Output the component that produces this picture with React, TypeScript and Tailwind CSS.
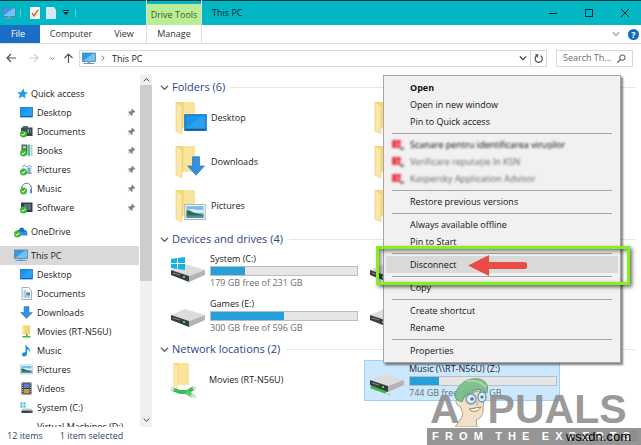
// Import dependencies
import { useState } from 'react';
import type { ReactNode } from 'react';

// Blue screen icon, used for desktop entries
const ScreenIcon = ({ className = 'w-[13px] h-[13px]' }: { className?: string }) => (
    <svg className={className} viewBox="0 0 26 22" preserveAspectRatio="none">
        <rect x="1" y="1" width="24" height="19" fill="#1a95ee" stroke="#1173bf" strokeWidth="1.5" />
        <path d="M2 18 L20 2 H24 V18 Z" fill="#35a9f5" opacity="0.6" />
        <rect x="2" y="18" width="22" height="2" fill="#0e5f9f" />
    </svg>
);

// Monitor with a stand
const PcIcon = () => (
    <svg className="w-[14px] h-[13px] shrink-0" viewBox="0 0 28 26">
        <rect x="1" y="2" width="26" height="17" fill="#2f9be8" stroke="#5f7f99" strokeWidth="1.5" />
        <path d="M2 18 L22 3 H26 V18 Z" fill="#8fd3fa" opacity="0.7" />
        <rect x="11" y="19" width="6" height="3" fill="#8fa5b5" />
        <rect x="3" y="22" width="22" height="2" fill="#5d9cc4" />
    </svg>
);

// Green sync tick
const Tick = () => (
    <g>
        <circle cx="7" cy="18" r="7" fill="#3fb83a" />
        <path d="M3.5 18 L6 20.5 L10.5 15.5" fill="none" stroke="#fff" strokeWidth="2" />
    </g>
);

const StarIcon = () => (
    <svg className="w-[11px] h-[11px] shrink-0" viewBox="0 0 22 22">
        <path d="M13 1 L15 8 L22 9 L16 14 L17 21 L11 17 L3 21 L6 13 L0 9 L8 8 Z" fill="#2b9be8" />
    </svg>
);

const CloudIcon = () => (
    <svg className="w-[14px] h-[13px] shrink-0" viewBox="0 0 28 26">
        <path d="M5 18 C3 12 8 9 10 10 C11 3 20 3 21 10 C27 10 28 18 24 20 H9 Z" fill="#1173c7" />
        <path d="M12 20 C11 15 15 12 18 14 C21 11 25 13 25 16 C28 17 28 21 25 21 H12 Z" fill="#2c8fe0" />
        <Tick />
    </svg>
);

const SyncedDocsIcon = () => (
    <svg className="w-[13px] h-[13px] shrink-0" viewBox="0 0 26 26">
        <rect x="2" y="5" width="23" height="17" fill="#35454e" />
        <rect x="6" y="2" width="10" height="5" fill="#4f6570" />
        <rect x="15" y="8" width="3" height="8" fill="#88a5b0" />
        <rect x="20" y="8" width="2" height="8" fill="#607986" />
        <Tick />
    </svg>
);

const BooksIcon = () => (
    <svg className="w-[13px] h-[13px] shrink-0" viewBox="0 0 26 26">
        <rect x="3" y="1" width="12" height="21" fill="#2e7866" />
        <rect x="6" y="4" width="6" height="5" fill="#f2c447" />
        <rect x="16" y="1" width="4" height="23" fill="#62b9a8" />
        <rect x="21" y="2" width="4" height="22" fill="#a9d5cc" />
        <Tick />
    </svg>
);

const SyncedPicturesIcon = () => (
    <svg className="w-[13px] h-[13px] shrink-0" viewBox="0 0 26 26">
        <path d="M3 6 H24 V22 H8 Z" fill="#e3eff5" />
        <path d="M4 7 L10 4 L14 8 L20 5 L24 8" fill="none" stroke="#76b5d6" strokeWidth="2" />
        <path d="M12 22 L18 11 L24 22 Z" fill="#8ea9b5" />
        <circle cx="18" cy="12" r="3" fill="#5fa6c8" />
        <Tick />
    </svg>
);

const HeadphonesIcon = () => (
    <svg className="w-[13px] h-[13px] shrink-0" viewBox="0 0 26 26">
        <path d="M3 16 C2 -2 24 -2 23 16" fill="none" stroke="#2d4654" strokeWidth="1.6" />
        <rect x="20" y="14" width="4" height="9" rx="2" fill="#3b8ed0" />
        <Tick />
    </svg>
);

const SoftwareIcon = () => (
    <svg className="w-[13px] h-[13px] shrink-0" viewBox="0 0 26 26">
        <rect x="2" y="3" width="23" height="19" fill="#2c4149" />
        <path d="M8 8 H22 M8 12 H22 M14 16 H22" stroke="#7fa0a8" strokeWidth="2" />
        <Tick />
    </svg>
);

const DocumentIcon = () => (
    <svg className="w-[13px] h-[13px] shrink-0" viewBox="0 0 26 26">
        <path d="M4 1 H17 L23 7 V25 H4 Z" fill="#f8fafb" stroke="#8b979e" strokeWidth="1.5" />
        <path d="M7 8 H12 M7 12 H20 M7 16 H20 M7 20 H20" stroke="#63a9cf" strokeWidth="2" />
        <rect x="13" y="11" width="7" height="6" fill="#4e92b8" />
    </svg>
);

const DownArrowIcon = ({ className = 'w-[13px] h-[13px] shrink-0' }: { className?: string }) => (
    <svg className={className} viewBox="0 0 26 26" preserveAspectRatio="none">
        <path d="M8 1 H18 V13 H25 L13 25 L1 13 H8 Z" fill="#3391e0" stroke="#2377bd" />
    </svg>
);

const NetFolderIcon = () => (
    <svg className="w-[13px] h-[13px] shrink-0" viewBox="0 0 26 26">
        <path d="M5 1 H20 V19 H5 Z" fill="#f6d56f" />
        <path d="M5 1 L9 4 V21 L5 19 Z" fill="#fbe6a0" />
        <path d="M12 18 H15 V22 H21 V25 H5 V22 H12 Z" fill="#43b649" />
    </svg>
);

const NoteIcon = () => (
    <svg className="w-[13px] h-[13px] shrink-0" viewBox="0 0 26 26">
        <path d="M12 1 C13 7 22 8 20 17 C19 12 15 11 14 11 V20 C14 26 4 27 4 21 C4 17 9 16 11 17 V1 Z" fill="#1c8de0" />
    </svg>
);

const PictureIcon = ({ className = 'w-[13px] h-[13px] shrink-0' }: { className?: string }) => (
    <svg className={className} viewBox="0 0 26 20">
        <rect x="1" y="1" width="24" height="18" fill="#f5f8fa" stroke="#9aa5ad" />
        <rect x="3" y="3" width="20" height="14" fill="#78bdf0" />
        <path d="M3 8 C9 5 14 9 23 7 V11 H3 Z" fill="#dceefa" />
        <path d="M3 8 C8 7 10 12 23 13 V15 H3 Z" fill="#2f6b4c" />
        <rect x="3" y="14" width="20" height="3" fill="#4b8fb5" />
    </svg>
);

const VideoIcon = () => (
    <svg className="w-[13px] h-[13px] shrink-0" viewBox="0 0 26 26">
        <rect x="3" y="1" width="20" height="24" fill="#39424a" />
        <rect x="7" y="3" width="12" height="9" fill="#5d7fc0" />
        <rect x="7" y="14" width="12" height="9" fill="#c79a4a" />
        <path d="M5 2 V25 M21 2 V25" stroke="#c6ccd0" strokeWidth="1.5" strokeDasharray="2 2" />
    </svg>
);

const SmallDriveIcon = ({ windows = false }: { windows?: boolean }) => (
    <svg className="w-[13px] h-[13px] shrink-0" viewBox="0 0 26 26">
        {windows && <path d="M1 3 H5 V7 H1 Z M7 3 H11 V7 H7 Z M1 9 H5 V13 H1 Z M7 9 H11 V13 H7 Z" fill="#1fb2e8" />}
        <path d="M6 15 H22 L25 19 H3 Z" fill="#c9cccd" />
        <rect x="3" y="19" width="22" height="5" fill="#3d4145" />
        <rect x="20" y="21" width="3" height="1" fill="#58d05c" />
    </svg>
);

const PinIcon = () => (
    <svg className="w-[9px] h-[9px] shrink-0" viewBox="0 0 18 18">
        <path d="M10 1 L17 8 L15 9 L14 8 L11 12 L11 15 L9 16 L6 12 L1 17 L5 11 L2 8 L3 7 L6 7 L10 4 L9 3 Z" fill="#7b868c" />
    </svg>
);

// Large folder, with an optional picture lying over its corner
const FolderIcon = ({ children }: { children?: ReactNode }) => (
    <span className="relative w-8 h-8 shrink-0">
        <svg className="w-8 h-8" viewBox="0 0 32 32">
            <path d="M1 0 H20 V26 H6 L1 28 Z" fill="#f7d778" />
            <path d="M9 0 H20 V26 H8 Z" fill="#fae39b" />
            <path d="M1 0 L7 4 V32 L1 29 Z" fill="#fbe7a8" stroke="#ecc865" strokeWidth="0.6" />
        </svg>
        {children}
    </span>
);

// Large drive
const DriveIcon = ({ windows = false, network = false }: { windows?: boolean; network?: boolean }) => (
    <svg className="w-[34px] h-[30px] shrink-0" viewBox="0 0 34 30">
        {network && (
            <g>
                <path d="M1 20 L15 25 L20 27" stroke="#3dbb3f" strokeWidth="5" fill="none" />
                <path d="M16 28 L22 25" stroke="#d9e8da" strokeWidth="3" />
            </g>
        )}
        <path d="M0 14 L14 8 L34 14 L18 20 Z" fill="#dcdcdc" />
        <path d="M18 20 L34 14 V19 L18 26 Z" fill="#b4b4b4" />
        <path d="M0 14 L18 20 V26 L0 19 Z" fill="#3a3c3e" />
        <path d="M2 17 L9 19" stroke="#85898c" strokeWidth="1" />
        <rect x="12" y="20" width="2" height="2" fill="#4ddb4f" />
        {windows && <path d="M0 3 L6 2 V7 H0 Z M7 2 L14 1 V7 H7 Z M0 8 H6 V13 L0 12 Z M7 8 H14 V14 L7 13 Z" fill="#16b1e7" />}
    </svg>
);

const NetworkFolderIcon = () => (
    <svg className="w-[34px] h-9 shrink-0" viewBox="0 0 34 36">
        <path d="M2 1 H18 V23 H2 Z" fill="#f7d778" />
        <path d="M8 1 H18 V23 H8 Z" fill="#fae39b" />
        <path d="M2 1 L7 4 V27 L2 24 Z" fill="#fbe7a8" />
        <path d="M1 27 L9 30 L16 30 L23 26" stroke="#3dbb56" strokeWidth="4" fill="none" />
        <path d="M15 30 L22 34" stroke="#58cf6d" strokeWidth="4" />
        <path d="M-1 26 L3 28 M20 33 L25 35 M22 27 L25 25" stroke="#d5dfd8" strokeWidth="3" />
    </svg>
);

// Red icon of the antivirus entries
const ShieldIcon = () => (
    <svg className="w-3 h-3 shrink-0 blur-[1px]" viewBox="0 0 12 12">
        <path d="M0 1 H9 L8 9 H0 Z" fill="#e8404a" />
        <path d="M4 3 L6 5 L4 8" stroke="#fbd5d7" fill="none" />
        <rect x="8" y="8" width="4" height="3" fill="#8b8f90" />
    </svg>
);

const Chevron = ({ className }: { className: string }) => (
    <svg className={className} viewBox="0 0 10 10">
        <path d="M1 3 L5 7 L9 3" fill="none" stroke="currentColor" strokeWidth="1.4" />
    </svg>
);

// Navigation pane data
const quickAccess = [
    { label: 'Desktop', icon: <ScreenIcon className="w-[13px] h-[11px] shrink-0" /> },
    { label: 'Documents', icon: <SyncedDocsIcon /> },
    { label: 'Books', icon: <BooksIcon /> },
    { label: 'Pictures', icon: <SyncedPicturesIcon /> },
    { label: 'Music', icon: <HeadphonesIcon /> },
    { label: 'Software', icon: <SoftwareIcon /> },
];

const thisPc = [
    { label: 'Desktop', icon: <ScreenIcon className="w-[13px] h-[11px] shrink-0" /> },
    { label: 'Documents', icon: <DocumentIcon /> },
    { label: 'Downloads', icon: <DownArrowIcon /> },
    { label: 'Movies (RT-N56U)', icon: <NetFolderIcon /> },
    { label: 'Music', icon: <NoteIcon /> },
    { label: 'Pictures', icon: <PictureIcon /> },
    { label: 'Videos', icon: <VideoIcon /> },
    { label: 'System (C:)', icon: <SmallDriveIcon windows /> },
    { label: 'Virtual Machines (D:)', icon: <SmallDriveIcon /> },
];

// Context menu data, one list for each block between the lines
const menuGroups = [
    ['Open', 'Open in new window', 'Pin to Quick access'],
    ['Scanare pentru identificarea virușilor', 'Verificare reputație în KSN', 'Kaspersky Application Advisor'],
    ['Restore previous versions'],
    ['Always available offline', 'Pin to Start'],
    ['Disconnect'],
    ['Copy'],
    ['Create shortcut', 'Rename'],
    ['Properties'],
];

// Title bar and ribbon tabs
const TitleBar = () => (
    <header className="flex h-11 border-b border-[#dcdddd] shrink-0 text-[9px]">
        <div className="flex flex-col w-[146px]">
            <div className="flex items-center h-[25px] bg-[#00b7c3] border-t border-[#083c42] pl-[2px] gap-1">
                <PcIcon />
                <span className="w-px h-2 bg-[#63ccd2]" />
                <svg className="w-[10px] h-3 ml-[5px]" viewBox="0 0 10 12">
                    <rect width="10" height="12" fill="#f5f5f5" />
                    <path d="M2 6 L4 9 L8 3" fill="none" stroke="#e0632f" strokeWidth="1.4" />
                </svg>
                <svg className="w-[10px] h-3 ml-[2px]" viewBox="0 0 10 12">
                    <path d="M0 0 H8 L10 3 V12 H0 Z" fill="#d7e8f2" />
                </svg>
                <svg className="w-[6px] h-[6px] ml-[3px]" viewBox="0 0 6 6">
                    <path d="M0 0 H6 V1 H0 Z M0 2 H6 L3 5 Z" fill="#0a2a2d" />
                </svg>
                <span className="w-px h-2 ml-[2px] bg-[#63ccd2]" />
            </div>
            <nav className="flex h-[18px] items-stretch">
                <button className="w-10 shrink-0 bg-[#1a6fc4] text-white pr-1">File</button>
                <button className="w-[62px] shrink-0">Computer</button>
                <button className="w-[44px] shrink-0">View</button>
            </nav>
        </div>
        <div className="flex flex-col w-14 border-x border-[#dcdddd]">
            <div className="h-1 bg-[#00b7c3] border-t border-[#083c42]" />
            <div className="h-[21px] bg-[#b9ee94] leading-[21px] text-center whitespace-nowrap text-[#3d5a35]">Drive Tools</div>
            <button className="h-[18px]">Manage</button>
        </div>
        <div className="flex flex-col flex-1">
            <div className="flex items-center justify-between h-[25px] bg-[#00b7c3] border-t border-[#083c42] pl-[10px] pr-3">
                <h1 className="text-[#06272a]">This PC</h1>
                <div className="flex items-center gap-7 text-[#0a2a2d]">
                    <button aria-label="Minimize">
                        <svg className="w-2 h-2" viewBox="0 0 8 8"><path d="M0 4.5 H8" stroke="currentColor" /></svg>
                    </button>
                    <button aria-label="Maximize">
                        <svg className="w-2 h-2" viewBox="0 0 8 8"><rect x="0.5" y="0.5" width="7" height="7" fill="none" stroke="currentColor" /></svg>
                    </button>
                    <button aria-label="Close">
                        <svg className="w-2 h-2" viewBox="0 0 8 8"><path d="M0 0 L8 8 M8 0 L0 8" stroke="currentColor" /></svg>
                    </button>
                </div>
            </div>
            <div className="flex items-center justify-end h-[18px] gap-2 pr-[2px]">
                <Chevron className="w-2 h-2 text-[#9a9a9a]" />
                <button aria-label="Help" className="w-[11px] h-[11px] rounded-full bg-[#0f6cc4] text-white leading-[11px] font-bold">?</button>
            </div>
        </div>
    </header>
);

// Arrows, address box and search box
const AddressBar = () => {

    // State
    const [search, setSearch] = useState('');

    return (
        <div className="flex items-center h-[31px] pb-[3px] pl-[6px] pr-2 shrink-0 text-[9px] text-[#555]">
            <button aria-label="Back">
                <svg className="w-[10px] h-[10px]" viewBox="0 0 10 10"><path d="M10 5 H1 M5 1 L1 5 L5 9" fill="none" stroke="#555" strokeWidth="1.2" /></svg>
            </button>
            <button aria-label="Forward" className="ml-[13px]">
                <svg className="w-[10px] h-[10px]" viewBox="0 0 10 10"><path d="M0 5 H9 M5 1 L9 5 L5 9" fill="none" stroke="#cfcfcf" strokeWidth="1.2" /></svg>
            </button>
            <button aria-label="Recent" className="ml-[11px]"><Chevron className="w-[5px] h-[5px]" /></button>
            <button aria-label="Up" className="ml-[9px]">
                <svg className="w-[9px] h-[10px]" viewBox="0 0 9 10"><path d="M4.5 10 V1 M0.5 5 L4.5 1 L8.5 5" fill="none" stroke="#555" strokeWidth="1.2" /></svg>
            </button>
            <div className="flex flex-1 items-center h-[17px] ml-[6px] border border-[#d9d9d9] pl-[2px]">
                <PcIcon />
                <Chevron className="w-[6px] h-[6px] ml-1 -rotate-90" />
                <span className="flex-1 ml-[6px] leading-none text-[#222]">This PC</span>
                <Chevron className="w-2 h-2 mr-[3px] text-[#333]" />
                <button aria-label="Refresh" className="flex items-center justify-center w-4 h-[15px] border-l border-[#d9d9d9]">
                    <svg className="w-[9px] h-[9px]" viewBox="0 0 10 10"><path d="M3 2 A4 4 0 1 0 7.5 2 M1.5 1 H4 V4" fill="none" stroke="#444" strokeWidth="1.2" /></svg>
                </button>
            </div>
            <label className="flex items-center w-[77px] h-[17px] ml-[9px] border border-[#d9d9d9] px-[6px]">
                <input
                    aria-label="Search This PC"
                    placeholder="Search Th..."
                    value={search}
                    onChange={(e) => setSearch(e.target.value)}
                    className="flex-1 w-0 min-w-0 outline-none placeholder:text-[#6d6d6d]"
                />
                <svg className="w-[9px] h-[9px] shrink-0" viewBox="0 0 10 10">
                    <circle cx="6" cy="4" r="3" fill="none" stroke="#444" strokeWidth="1.1" />
                    <path d="M4 6 L0.5 9.5" stroke="#444" strokeWidth="1.3" />
                </svg>
            </label>
        </div>
    );
};

// Row of the navigation pane
const NavRow = ({ label, icon, pinned = false }: { label: string; icon: ReactNode; pinned?: boolean }) => (
    <li className="flex items-center h-[19px] pl-5 pr-[3px] gap-1">
        {icon}
        <span className="flex-1 whitespace-nowrap">{label}</span>
        {pinned && <PinIcon />}
    </li>
);

// Navigation pane with its scrollbar
const NavPane = () => (
    <aside className="flex w-[152px] shrink-0 overflow-hidden text-[9px] text-[#222]">
        <div className="w-[140px] pt-[9px] pr-px">
            <div className="flex items-center h-[19px] pl-[17px] gap-[3px]"><StarIcon />Quick access</div>
            <ul className="pb-[5px]">
                {quickAccess.map((item) => <NavRow key={item.label} {...item} pinned />)}
            </ul>
            <div className="flex items-center h-[19px] pl-[14px] gap-[3px] mb-[5px]"><CloudIcon />OneDrive</div>
            <div className="flex items-center h-[19px] pl-[14px] gap-[3px] bg-[#d9d9d9]"><PcIcon />This PC</div>
            <ul>
                {thisPc.map((item) => <NavRow key={item.label} {...item} />)}
            </ul>
        </div>
        <div className="flex flex-col items-center w-3 bg-[#f0f0f0] text-[#444]">
            <Chevron className="w-[7px] h-[10px] rotate-180 shrink-0" />
            <div className="w-full h-[196px] bg-[#cdcdcd] shrink-0" />
            <Chevron className="w-[7px] h-[10px] mt-auto mb-[2px]" />
        </div>
    </aside>
);

// Collapsible section of the content area
const Section = ({ title, children }: { title: string; children: ReactNode }) => {

    // State
    const [open, setOpen] = useState(true);

    return (
        <section>
            <div className="flex items-center gap-[6px]">
                <button className="flex items-center gap-[3px] text-[11px] leading-[18px] text-[#2f3f8f] whitespace-nowrap" onClick={() => setOpen(!open)}>
                    <Chevron className="w-[9px] h-[9px] text-[#666]" />
                    {title}
                </button>
                <span className="flex-1 h-px bg-[#e6e6e6]" />
            </div>
            {open && <div className="grid grid-cols-[199px_201px]">{children}</div>}
        </section>
    );
};

const FolderItem = ({ label, children }: { label: string; children?: ReactNode }) => (
    <div className="flex items-center h-11 pl-[15px] gap-1">
        <FolderIcon>{children}</FolderIcon>
        <span className="text-[9px] text-[#222]">{label}</span>
    </div>
);

// Drive with its usage bar
const DriveItem = ({ label, free, used, icon, className = 'h-[45px] pl-[11px]' }: {
    label: string;
    free: string;
    used: number;
    icon: ReactNode;
    className?: string;
}) => (
    <div className={`flex items-center gap-[5px] ${className}`}>
        {icon}
        <div className="w-[148px] text-[9px] leading-[14px] whitespace-nowrap">
            <p className="text-[#222]">{label}</p>
            <div className="h-[10px] border border-[#bcbcbc] bg-[#e6e6e6]">
                <div className="h-full bg-[#26a0da]" style={{ width: `${used}%` }} />
            </div>
            <p className="text-[#6d6d6d]">{free}</p>
        </div>
    </div>
);

// Content area
const Content = () => (
    <main className="flex-1 min-w-0 pl-2 pr-[5px] pt-[3px]">
        <Section title="Folders (6)">
            <FolderItem label="Desktop"><ScreenIcon className="absolute left-[9px] top-3 w-[23px] h-[18px]" /></FolderItem>
            <FolderItem label="Documents" />
            <FolderItem label="Downloads"><DownArrowIcon className="absolute left-3 top-[10px] w-[18px] h-5" /></FolderItem>
            <FolderItem label="Music" />
            <FolderItem label="Pictures"><PictureIcon className="absolute left-[9px] top-[13px] w-[22px] h-[18px]" /></FolderItem>
            <FolderItem label="Videos" />
        </Section>
        <div className="h-[2px]" />
        <Section title="Devices and drives (4)">
            <DriveItem label="System (C:)" free="179 GB free of 231 GB" used={23} icon={<DriveIcon windows />} />
            <DriveItem label="Virtual Machines (D:)" free="120 GB free of 231 GB" used={48} icon={<DriveIcon />} />
            <DriveItem label="Games (E:)" free="300 GB free of 596 GB" used={50} icon={<DriveIcon />} />
            <DriveItem label="Backup (F:)" free="80 GB free of 596 GB" used={86} icon={<DriveIcon />} />
        </Section>
        <div className="h-[2px]" />
        <Section title="Network locations (2)">
            <div className="flex items-center h-11 pl-[11px] gap-1">
                <NetworkFolderIcon />
                <span className="text-[9px] text-[#222]">Movies (RT-N56U)</span>
            </div>
            <DriveItem
                label="Music (\\RT-N56U) (Z:)"
                free="744 GB free of 931 GB"
                used={20}
                icon={<DriveIcon network />}
                className="h-[41px] mt-[2px] ml-[5px] pl-[5px] bg-[#cce8ff] border border-[#99d1ff]"
            />
        </Section>
    </main>
);

// Menu lying over the content, with the marked entry
const ContextMenu = () => (
    <div className="absolute left-[383px] top-[75px] w-[238px]">
        <ul className="border border-[#a5a5a5] bg-[#f1f1f1] py-[3px] px-[2px] text-[9px] text-[#111] shadow-[2px_2px_2px_#00000080]">
            {menuGroups.map((group, g) => (
                <li key={group[0]}>
                    {g > 0 && <hr className="mx-[6px] mt-[3px] mb-[2px] border-[#a5a5a5]" />}
                    {group.map((label, i) => (
                        <button
                            key={label}
                            className={`flex items-center w-full h-[17px] pl-[6px] gap-[6px] text-left whitespace-nowrap
                                ${label === 'Open' ? 'font-bold' : ''}
                                ${label === 'Disconnect' ? 'bg-[#d9d9d9]' : ''}
                            `}
                        >
                            <span className="w-3 shrink-0">{g === 1 && <ShieldIcon />}</span>
                            <span
                                className={`
                                    ${g === 1 ? 'blur-[1px]' : ''}
                                    ${g === 1 && i === 0 ? 'text-black' : ''}
                                    ${g === 1 && i > 0 ? 'text-[#666]' : ''}
                                `}
                            >
                                {label}
                            </span>
                        </button>
                    ))}
                </li>
            ))}
        </ul>
        <div className="absolute -left-[7px] top-[171px] w-[254px] h-[39px] border-3 border-[#84f01e] shadow-[2px_2px_4px_#00000099,inset_2px_2px_4px_#00000080]" />
        <svg className="absolute left-[85px] top-[180px] w-[59px] h-[21px]" viewBox="0 0 59 21">
            <path d="M0 10.5 L21 0 V7 H56 A3.5 3.5 0 0 1 56 14 H21 V21 Z" fill="#e94b45" />
        </svg>
    </div>
);

// Site mark in the bottom corner
const Watermark = () => (
    <div className="absolute right-0 bottom-0 w-[214px] font-['Liberation_Sans',sans-serif] pointer-events-none">
        <div className="flex items-end pl-[3px] pb-px h-9 text-[41px] leading-9 font-bold text-[#8c8c8c]/90">
            <span>A</span>
            <svg className="w-9 h-[50px] -ml-2 shrink-0" viewBox="0 0 36 50">
                <path d="M6 23 C3 21 3 29 8 29 L11 37 C9 42 6 46 3 50 H25 L24 43 C29 42 32 36 31 31 L33 17 L25 14 Z" fill="#f1dec3" opacity="0.9" stroke="#a89678" strokeWidth="1" />
                <path d="M3 20 C4 8 15 0 27 2 C34 3 37 9 35 16 L27 12 C21 13 18 17 13 18 L10 25 L5 23 Z" fill="#79bd84" opacity="0.9" stroke="#5f9c73" strokeWidth="1" />
                <path d="M15 4 C22 3 29 5 34 10" fill="none" stroke="#a8d9a8" strokeWidth="2" />
                <ellipse cx="19" cy="22" rx="5" ry="5" fill="#dcebf4" stroke="#6d93b3" strokeWidth="1.3" />
                <ellipse cx="30" cy="20" rx="4" ry="5" fill="#dcebf4" stroke="#6d93b3" strokeWidth="1.3" />
                <circle cx="20" cy="22" r="1.8" fill="#4d7798" />
                <circle cx="30" cy="20" r="1.6" fill="#4d7798" />
                <path d="M17 32 C21 36 26 35 29 30 Z" fill="#fff" stroke="#a07c5c" />
                <path d="M24 25 C27 25 27 28 24 28" fill="none" stroke="#b89b78" />
            </svg>
            <span>PUALS</span>
        </div>
        <div className="flex items-center h-[17px] pl-[5px] bg-[#8a8a8a]/90 text-[11px] font-bold text-white whitespace-nowrap">
            <span className="flex justify-between w-[198px]">
                {'FROM THE EXPERTS'.split('').map((letter, i) => <span key={i}>{letter}</span>)}
            </span>
        </div>
        <span className="absolute right-[10px] bottom-0 text-[13px] leading-4 text-black">wsxdn.com</span>
    </div>
);

// Visible page
const App = () => (
    <div className="relative flex flex-col h-screen overflow-hidden bg-white font-['Open_Sans',sans-serif] text-[#333]">
        <TitleBar />
        <AddressBar />
        <div className="flex flex-1 min-h-0">
            <NavPane />
            <Content />
        </div>
        <footer className="flex items-center h-[18px] shrink-0 pl-[7px] pr-1 gap-[17px] text-[9px] text-[#2f3f6f]">
            <span>12 items</span>
            <span className="flex-1">1 item selected</span>
            <button aria-label="Details view">
                <svg className="w-[11px] h-[10px]" viewBox="0 0 11 10">
                    <path d="M1 2 H4 M1 5 H4 M1 8 H4 M6 2 H10 M6 5 H10 M6 8 H10" stroke="#444" />
                </svg>
            </button>
            <button aria-label="Tiles view" className="-ml-2">
                <svg className="w-[11px] h-[10px]" viewBox="0 0 11 10">
                    <rect x="0.5" y="0.5" width="10" height="9" fill="#cce8ff" stroke="#3f8fd0" />
                    <path d="M2 3 H9 M2 6 H9" stroke="#2670b0" />
                </svg>
            </button>
        </footer>
        <ContextMenu />
        <Watermark />
    </div>
);

export default App;
